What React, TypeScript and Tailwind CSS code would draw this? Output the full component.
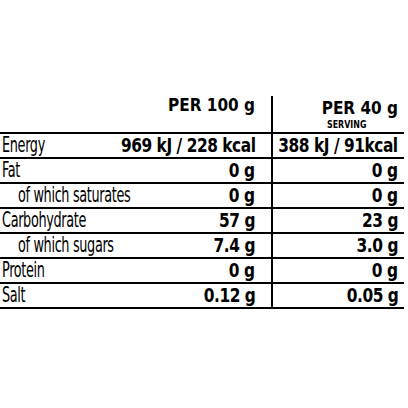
const rows: { label: string; a: string; b: string; indent?: boolean }[] = [
  { label: 'Energy', a: '969 kJ / 228 kcal', b: '388 kJ / 91kcal' },
  { label: 'Fat', a: '0 g', b: '0 g' },
  { label: 'of which saturates', a: '0 g', b: '0 g', indent: true },
  { label: 'Carbohydrate', a: '57 g', b: '23 g' },
  { label: 'of which sugars', a: '7.4 g', b: '3.0 g', indent: true },
  { label: 'Protein', a: '0 g', b: '0 g' },
  { label: 'Salt', a: '0.12 g', b: '0.05 g' },
];

const font = { fontFamily: '"DejaVu Sans Condensed", "Liberation Sans Narrow", "DejaVu Sans", sans-serif' };

export default function App() {
  return (
    <div className="h-[408px] w-[408px] bg-white pt-[96px] text-black" style={font}>
      <div className="w-[404px]">
        <div className="flex h-[38px] border-b-2 border-black">
          <div className="flex flex-1 items-start justify-end border-r-2 border-black pr-[16px] pt-[1px]">
            <span className="text-[17px] font-bold leading-none">PER 100 g</span>
          </div>
          <div className="flex w-[131px] flex-col items-end pr-[6px] pt-[4px]">
            <span className="text-[17px] font-bold leading-none">PER 40 g</span>
            <span className="mr-[22px] mt-[2px] inline-block origin-left scale-x-80 text-[11px] font-bold leading-none">SERVING</span>
          </div>
        </div>
        {rows.map((row) => (
          <div key={row.label} className="flex h-[25px] border-b-2 border-black">
            <div className="flex flex-1 items-center justify-between border-r-2 border-black pr-[16px]">
              <span
                className={`inline-block origin-left scale-x-68 whitespace-nowrap text-[21px] leading-none tracking-[-0.5px] ${row.indent ? 'ml-[18px]' : 'ml-[2px]'}`}
              >
                {row.label}
              </span>
              <span className="inline-block origin-right scale-x-90 whitespace-nowrap text-[19px] font-bold leading-none tracking-[-0.5px]">{row.a}</span>
            </div>
            <div className="flex w-[131px] items-center justify-end pr-[6px]">
              <span className="inline-block origin-right scale-x-90 whitespace-nowrap text-[19px] font-bold leading-none tracking-[-0.5px]">{row.b}</span>
            </div>
          </div>
        ))}
      </div>
    </div>
  );
}
